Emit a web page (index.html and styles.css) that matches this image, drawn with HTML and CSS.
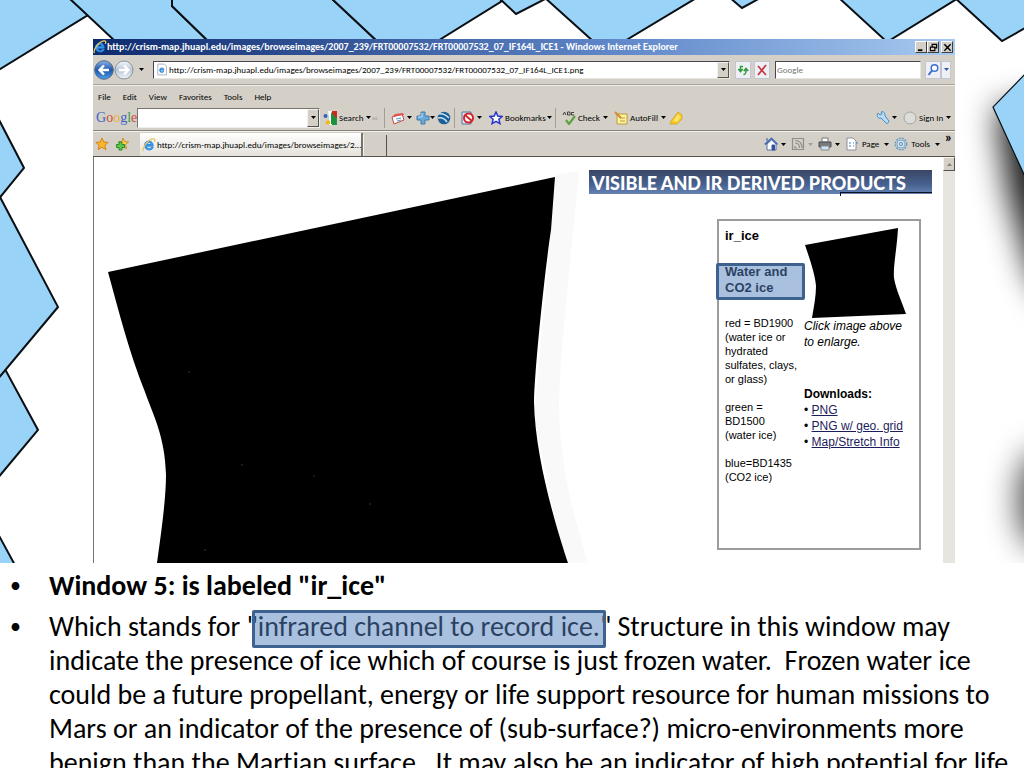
FILE: index.html
```html
<!DOCTYPE html>
<html lang="en">
<head>
<meta charset="utf-8">
<title>Window 5: ir_ice</title>
<link rel="stylesheet" href="styles.css">
</head>
<body>
<svg width="0" height="0" class="defs" aria-hidden="true">
  <defs>
    <linearGradient id="blueBall" x1="0" y1="0" x2="0" y2="1"><stop offset="0" stop-color="#8fb4e4"/><stop offset=".5" stop-color="#1d55ad"/><stop offset="1" stop-color="#4fa0e8"/></linearGradient>
    <linearGradient id="paleBall" x1="0" y1="0" x2="0" y2="1"><stop offset="0" stop-color="#f4f7fb"/><stop offset=".5" stop-color="#b9c6d6"/><stop offset="1" stop-color="#eef4fa"/></linearGradient>
    <symbol id="ie" viewBox="0 0 14 14"><path d="M11.2 8.2H4.6c.2 2.6 3.700 3 4.600 1.300h2.100C9.800 13.300 2.500 12.800 2.500 7.300 2.500 1.500 11.600 1.200 11.200 8.200zM4.700 6.500h4.500C8.900 4 5.200 4 4.700 6.500z" fill="#3c9bf0" stroke="#2a86dc" stroke-width=".9"/><path d="M1.500 13C-.5 10.500 5.500 1.800 11 .9c2-.3 2.200 1.200 1.200 3" fill="none" stroke="#e6c95a" stroke-width="1.300"/></symbol>
    <symbol id="arrow" viewBox="0 0 5 3"><path d="M0 0h5L2.500 3z" fill="currentColor"/></symbol>
    <symbol id="star" viewBox="0 0 14 14"><path d="M7 1l1.800 4 4.400.4-3.300 2.900 1 4.300L7 10.300l-3.900 2.300 1-4.300L.8 5.400 5.200 5z"/></symbol>
  </defs>
</svg>
<main class="slide">
  <svg class="backdrop" viewBox="0 0 1024 564" preserveAspectRatio="none" aria-hidden="true">
    <defs><filter id="soft" x="-200%" y="-100%" width="500%" height="300%"><feGaussianBlur stdDeviation="16"/></filter></defs>
    <g filter="url(#soft)"><path d="M996 108L1060 100V310L1034 280 1008 190z" fill="#000" opacity=".9"/><ellipse cx="1042" cy="500" rx="24" ry="50" opacity=".7"/></g>
    <g fill="#99d3f7" stroke="#0a0f14" stroke-width="2">
      <path d="M-3-3H68L88 15-3 71z"/>
      <path d="M68-3L116 42H209L172 6V-3z"/>
      <path d="M172-3V6L209 42H378L330-3z"/>
      <path d="M330-3L378 42H436L502 1 498-3z"/>
      <path d="M498-3L516 14 549-3z"/>
      <path d="M544-3L594 42H623L698-3z"/>
      <path d="M729-3L742 8 762-3z"/>
      <path d="M838-3L887 42 960-3z"/>
      <path d="M954-3L1002 41 1027 27V-3z"/>
      <path d="M1027 72L993 107 1027 181z" stroke-width="1.200"/>
      <path d="M-3 116L24 168-3 201z"/>
      <path d="M-3 360H0L38 430-3 479z"/>
      <path d="M-3 191L0 197 58 307-3 380z"/>
      <path d="M-3 532L16 567H-3z"/>
    </g>
  </svg>

  <section class="browser" aria-label="Windows Internet Explorer">
    <header class="titlebar">
      <svg class="icon"><use href="#ie"/></svg>
      <h1>http://crism-map.jhuapl.edu/images/browseimages/2007_239/FRT00007532/FRT00007532_07_IF164L_ICE1 - Windows Internet Explorer</h1>
      <div class="winbtns">
        <button aria-label="Minimize"><svg viewBox="0 0 10 10"><path d="M1 8h5" stroke="#000" stroke-width="2"/></svg></button>
        <button aria-label="Restore"><svg viewBox="0 0 10 10"><path d="M3.500 4V1.500h5v4H7M1.500 4.500h5v4h-5zM3 1.500h6M1 4.500h6" fill="none" stroke="#000" stroke-width="1.300"/></svg></button>
        <button class="apart" aria-label="Close"><svg viewBox="0 0 10 10"><path d="M1.500 1.500l7 7m0-7l-7 7" stroke="#000" stroke-width="1.600"/></svg></button>
      </div>
    </header>

    <div class="navbar">
      <div class="travel">
        <button aria-label="Back"><svg viewBox="0 0 20 22"><circle cx="10" cy="11" r="9.300" fill="url(#blueBall)" stroke="#54698c"/><path d="M15 11H6m4-4.500L5.500 11l4.500 4.500" fill="none" stroke="#fff" stroke-width="2.400"/></svg></button>
        <button aria-label="Forward"><svg viewBox="0 0 20 22"><circle cx="10" cy="11" r="9" fill="url(#paleBall)" stroke="#8a93a0"/><path d="M5 11h9m-4-4.500l4.500 4.500-4.500 4.500" fill="none" stroke="#fff" stroke-width="2.400"/></svg></button>
        <button class="recent" aria-label="Recent pages"><svg class="arrow"><use href="#arrow"/></svg></button>
      </div>
      <div class="address">
        <svg class="pageicon" viewBox="0 0 12 14"><path d="M1 .5h8l2.500 2.500v10.500H1z" fill="#fff" stroke="#9aa7b8"/><path d="M8.500 8H4.200c.2 1.800 2.500 2 3 1h1.300C7.500 11.500 3 11.300 3 7.800 3 4 9 4 8.500 8zM4.400 6.800h2.700C6.800 5.200 4.600 5.200 4.400 6.800z" fill="#2f86d6" stroke="#2f86d6" stroke-width=".6"/></svg>
        <input type="text" aria-label="Address" value="http://crism-map.jhuapl.edu/images/browseimages/2007_239/FRT00007532/FRT00007532_07_IF164L_ICE1.png">
        <button class="drop" aria-label="Show addresses"><svg class="arrow"><use href="#arrow"/></svg></button>
      </div>
      <button class="square" aria-label="Refresh"><svg viewBox="0 0 14 14"><path d="M7 3.500H4.500V8M2.300 6l2.200 2.600L6.700 6M7.500 11.500c2 0 2.500-1 2.500-4.500M7.800 8L10 5.500 12.200 8" fill="none" stroke="#2f9a3c" stroke-width="1.500"/></svg></button>
      <button class="square" aria-label="Stop"><svg viewBox="0 0 14 14"><path d="M3 3l8 9M11 2L3 12" stroke="#c63a44" stroke-width="1.800"/></svg></button>
      <input class="websearch" type="text" aria-label="Search the web" placeholder="Google">
      <div class="searchbtns">
        <button class="square" aria-label="Search"><svg viewBox="0 0 14 14"><circle cx="8.500" cy="5" r="3.300" fill="#fff" stroke="#3b6fd0" stroke-width="1.500"/><path d="M6 7.500L2.500 12" stroke="#3b6fd0" stroke-width="2"/></svg></button>
        <button class="square slim" aria-label="Search options"><svg class="arrow"><use href="#arrow"/></svg></button>
      </div>
    </div>

    <nav class="menubar" aria-label="Menu">
      <button>File</button><button>Edit</button><button>View</button><button>Favorites</button><button>Tools</button><button>Help</button>
    </nav>

    <div class="googlebar">
      <span class="logo"><i class="b">G</i><i class="r">o</i><i class="y">o</i><i class="b">g</i><i class="g">l</i><i class="r">e</i></span>
      <div class="combo"><input type="text" aria-label="Google search"><button class="drop" aria-label="Search history"><svg class="arrow"><use href="#arrow"/></svg></button></div>
      <button class="tool"><svg class="icon" viewBox="0 0 14 14"><path d="M5 0h9v14H6z" fill="#1d9a42"/><path d="M8 0h6v7H8z" fill="#c92b21"/><path d="M5 0h4v14H6z" fill="#fff"/><path d="M8 1v12l5 1V7z" fill="#1b9140"/><circle cx="2.500" cy="5" r="2" fill="#3560c0"/><circle cx="5" cy="11.500" r="2.300" fill="#f0b81c"/></svg>Search<svg class="arrow"><use href="#arrow"/></svg></button>
      <span class="grip">◦◦</span>
      <button class="tool ruled" aria-label="Gadgets"><svg class="icon" viewBox="0 0 14 14"><path d="M1 6l10-3 2 6-10 4z" fill="#fff" stroke="#c9463d"/><path d="M1 6l3-3 8-1 1 2z" fill="#e0564e"/><path d="M5 8l5-1M6 10l4-1" stroke="#4d9ad3"/></svg><svg class="arrow"><use href="#arrow"/></svg></button>
      <button class="tool" aria-label="Add"><svg class="icon" viewBox="0 0 14 14"><path d="M5 1h4v4h4v4H9v4H5V9H1V5h4z" fill="#6aaada" stroke="#447ba5"/><path d="M6 2v4H2" fill="none" stroke="#bfe0f6"/></svg><svg class="arrow near"><use href="#arrow"/></svg></button>
      <button class="tool" aria-label="Earth"><svg class="icon" viewBox="0 0 14 14"><circle cx="7" cy="7" r="6.300" fill="#1b5f94"/><path d="M2 3c3-1 6 0 10 4M1 7c4-1 7 1 9 4" stroke="#c7e3f3" fill="none" stroke-width="1.600"/></svg></button>
      <button class="tool ruled" aria-label="Popup blocker"><svg class="icon" viewBox="0 0 14 14"><path d="M1 1h9v12H1z" fill="#dbe9f6" stroke="#55749b"/><circle cx="7.500" cy="7" r="4.500" fill="#fff" stroke="#d1262c" stroke-width="2"/><path d="M4 4l7 6" stroke="#d1262c" stroke-width="2"/></svg><svg class="arrow"><use href="#arrow"/></svg></button>
      <button class="tool wide"><svg class="icon" fill="#fff" stroke="#2532cc" stroke-width="1.500"><use href="#star"/></svg>Bookmarks<svg class="arrow near"><use href="#arrow"/></svg></button>
      <button class="tool ruled"><svg class="icon" viewBox="0 0 14 14"><path d="M1 4l1.500-3L4 4M5.500 1v3H8V1zM12 1.500H9.500V4H12" fill="none" stroke="#333" stroke-width=".9"/><path d="M4 9l3 4 6-8" fill="none" stroke="#5da33f" stroke-width="2.200"/></svg>Check<svg class="arrow"><use href="#arrow"/></svg></button>
      <button class="tool"><svg class="icon" viewBox="0 0 14 14"><path d="M3 3h10v10H3z" fill="#fff3a0" stroke="#b99a3a"/><path d="M6 7h5M6 10h5" stroke="#b99a3a"/><path d="M1 1l6 6" stroke="#d88932" stroke-width="2.200"/></svg>AutoFill<svg class="arrow"><use href="#arrow"/></svg></button>
      <button class="tool" aria-label="Highlight"><svg class="icon" viewBox="0 0 14 14"><path d="M9 1l4 3v4l-5 5H1l1-3z" fill="#f4c61d" stroke="#c89812" stroke-width=".6"/><path d="M9 3L4 10l4 1 4-5" fill="#fce36a"/></svg></button>
      <span></span>
      <button class="tool" aria-label="Settings"><svg class="icon" viewBox="0 0 14 14"><path d="M2 2l2 2 2-1-1-2c3-1 4 1 4 4l4 5c0 2-2 3-3 2L5 7C2 8 0 5 2 2z" fill="#b7dcf4" stroke="#4d8dc0"/></svg><svg class="arrow"><use href="#arrow"/></svg></button>
      <button class="tool"><svg class="icon" viewBox="0 0 14 14"><circle cx="7" cy="7" r="6" fill="#dcdcda" stroke="#a5a5a2"/></svg>Sign In<svg class="arrow"><use href="#arrow"/></svg></button>
    </div>

    <div class="tabbar">
      <div class="favs">
        <button aria-label="Favorites center"><svg class="icon" fill="#fbb52c" stroke="#d3851a"><use href="#star"/></svg></button>
        <button aria-label="Add to favorites"><svg class="icon" viewBox="0 0 14 14"><path d="M8 1l1.500 3.500 4 .5-3 2.500 1 4L7 10l-3 1 1-4-2-2 4-.5z" fill="#fbd04b" stroke="#c88e25"/><path d="M4 5h3v2.500h2.500v3H7V13H4v-2.500H1.500v-3H4z" fill="#5fc750" stroke="#2b8a2b"/></svg></button>
      </div>
      <button class="tab"><svg class="icon"><use href="#ie"/></svg>http://crism-map.jhuapl.edu/images/browseimages/2...</button>
      <button class="newtab" aria-label="New tab"></button>
      <div class="commands">
        <button class="tool" aria-label="Home"><svg class="icon" viewBox="0 0 14 14"><path d="M3 7v6h9V7L7.500 3z" fill="#fff" stroke="#5871a5"/><path d="M.8 7.500L7.500 1.500l6 6" fill="none" stroke="#4a6fb5" stroke-width="1.700"/><path d="M3 1v3M8 8h2.500v5H8z" fill="#32549c" stroke="#32549c"/></svg><svg class="arrow"><use href="#arrow"/></svg></button>
        <button class="tool dim" aria-label="Feeds"><svg class="icon" viewBox="0 0 14 14"><path d="M1.500 1.500h11v11h-11zM4 6c3 0 4.500 2 4.500 5M4 3.500c4.500 0 7 3 7 7.500M4 9v2h2" fill="none" stroke="#8e8e8a" stroke-width="1.200"/></svg><svg class="arrow"><use href="#arrow"/></svg></button>
        <button class="tool" aria-label="Print"><svg class="icon" viewBox="0 0 14 14"><path d="M4 1h6v4H4z" fill="#fff" stroke="#777"/><path d="M1 5h12v5H1z" fill="#77797d" stroke="#4d5055"/><path d="M3 9h8v4H3z" fill="#cfe4f7" stroke="#888"/></svg><svg class="arrow"><use href="#arrow"/></svg></button>
        <button class="tool"><svg class="icon" viewBox="0 0 14 14"><path d="M2 1h6l3 3v9H2z" fill="#fff" stroke="#8c9199"/><path d="M4 6h2M4 9h2M8 6h1M8 9h1M11 6h2" stroke="#4b7ac0"/></svg>Page<svg class="arrow"><use href="#arrow"/></svg></button>
        <button class="tool"><svg class="icon" viewBox="0 0 14 14"><circle cx="7" cy="7" r="5.700" fill="none" stroke="#6b9cc2" stroke-width="1.500" stroke-dasharray="2 1"/><circle cx="7" cy="7" r="4" fill="#cfe6f6" stroke="#7fadd0"/><circle cx="7" cy="7" r="1.700" fill="#d4d0c8" stroke="#6b9cc2"/></svg>Tools<svg class="arrow"><use href="#arrow"/></svg></button>
        <button class="more" aria-label="More commands">»</button>
      </div>
    </div>

    <div class="viewport">
      <svg class="scene" viewBox="0 0 495 406" role="img" aria-label="ir_ice browse image">
        <path d="M462 18L485 14C478 90 466 190 465 250 466 310 480 360 494 406H470L440 260z" fill="#f9f9fa"/>
        <path d="M14 115L461 20 457 73C452 105 441 205 440 245 441 300 462 370 474 406H63C68 370 72 340 72 318 71 280 60 260 51 235 35 195 25 155 14 115z"/>
        <g fill="#2a2410"><circle cx="95" cy="215" r="1"/><circle cx="276" cy="347" r="1"/><circle cx="220" cy="319" r="1"/><circle cx="111" cy="393" r="1"/><circle cx="148" cy="308" r="1"/></g>
      </svg>
      <div class="side">
        <h2 class="banner">VISIBLE AND IR DERIVED PRODUCTS</h2>
        <article class="panel">
          <div class="legend">
            <h3>ir_ice</h3>
            <p class="kind"><span>Water and<br>CO2 ice</span></p>
            <p>red = BD1900<br>(water ice or<br>hydrated<br>sulfates, clays,<br>or glass)</p>
            <p>green =<br>BD1500<br>(water ice)</p>
            <p>blue=BD1435<br>(CO2 ice)</p>
          </div>
          <div class="files">
            <svg viewBox="0 0 102 90" role="img" aria-label="ir_ice thumbnail"><path d="M1 17L94 0C93 20 89 38 90 50 92 62 98 74 102 86L8 90C10 78 12 68 12 58 11 46 6 32 1 17z"/></svg>
            <p><em>Click image above<br>to enlarge.</em></p>
            <h4>Downloads:</h4>
            <ul>
              <li><a href="#png">PNG</a></li>
              <li><a href="#grid">PNG w/ geo. grid</a></li>
              <li><a href="#map">Map/Stretch Info</a></li>
            </ul>
          </div>
        </article>
      </div>
      <div class="scroll"><button aria-label="Scroll up"><svg class="arrow" viewBox="0 0 5 3"><path d="M0 3h5L2.500 0z" fill="#85827b"/></svg></button></div>
    </div>
  </section>

  <ul class="notes">
    <li><strong>Window 5: is labeled "ir_ice"</strong></li>
    <li>Which stands for "<span class="marked">infrared channel to record ice.</span>" Structure in this window may<br>indicate the presence of ice which of course is just frozen water.&nbsp; Frozen water ice<br>could be a future propellant, energy or life support resource for human missions to<br>Mars or an indicator of the presence of (sub-surface?) micro-environments more<br>benign than the Martian surface.&nbsp; It may also be an indicator of high potential for life</li>
  </ul>
</main>
</body>
</html>
```
FILE: styles.css
```css
* { box-sizing: border-box; }
body { margin: 0; background: #fff; color: #000; }
h1, h2, h3, h4, p, ul { margin: 0; padding: 0; }
ul { list-style: none; }
button, input { font: inherit; color: inherit; margin: 0; padding: 0; border: 0; background: none; border-radius: 0; min-width: 0; }
button { display: flex; align-items: center; justify-content: center; white-space: nowrap; }
svg { display: block; flex: none; }
.defs { position: absolute; }
.icon { width: 14px; height: 14px; }
.arrow { width: 5px; height: 3px; }

.slide { position: relative; height: 100vh; overflow: hidden; }
.backdrop { position: absolute; top: 0; left: 0; width: 100%; height: 564px; }

.browser {
  position: relative;
  margin: 39px 69px 0 93px;
  background: #d4d0c8;
  font-family: Carlito, Calibri, "Liberation Sans", sans-serif;
  font-size: 9px;
  line-height: 14px;
  font-variant-ligatures: none;
}
.titlebar { display: flex; align-items: center; height: 16px; padding-right: 2px; background: linear-gradient(90deg, #0d2a6d, #5f86c8 60%, #a6caf0); color: #fff; }
.titlebar h1 { flex: 1; min-width: 0; overflow: hidden; white-space: nowrap; font-size: 10px; line-height: 16px; }
.winbtns { display: flex; }
.winbtns button { width: 12px; height: 12px; background: #d4d0c8; border: 1px solid; border-color: #fff #404040 #404040 #fff; }
.winbtns .apart { margin-left: 2px; }
.winbtns svg { width: 9px; height: 9px; }

.navbar { display: flex; align-items: center; height: 30px; padding-right: 4px; border-bottom: 1px solid #a8a59d; }
.travel { display: flex; width: 60px; padding-left: 1px; }
.travel svg:not(.arrow) { width: 20px; height: 22px; }
.recent { width: 14px; }
.address { flex: 1; display: flex; align-items: center; height: 18px; padding-left: 3px; background: #fff; border: 1px solid; border-color: #4a4550 #e8e6e0 #e8e6e0 #4a4550; margin-right: 5px; }
.address input { flex: 1; height: 16px; margin-left: 2px; }
.pageicon { width: 10px; height: 13px; }
.drop { width: 12px; height: 16px; background: #d4d0c8; border: 1px solid; border-color: #f4f2ee #55524c #55524c #f4f2ee; }
.square { width: 16px; height: 18px; background: #eef0f5; border: 1px solid #c2c6d0; margin-right: 3px; }
.square svg:not(.arrow) { width: 14px; height: 14px; }
.websearch { width: 146px; height: 18px; margin: 0 4px 0 2px; padding-left: 1px; background: #fff; border: 1px solid; border-color: #4a4550 #e8e6e0 #e8e6e0 #4a4550; }
.websearch::placeholder { color: #777; opacity: 1; }
.searchbtns { display: flex; color: #2c5c9c; }
.searchbtns .square { margin: 0; }
.searchbtns .slim { width: 10px; }

.menubar { display: flex; gap: 12px; height: 20px; padding: 2px 5px 0; border-top: 1px solid #eeece6; }

.googlebar {
  display: grid;
  grid-template-columns: 44px 183px 52px 12px 29px 21px 20px 33px 68px 56px 55px 18px 1fr 27px 55px;
  align-items: center;
  height: 26px;
  border-bottom: 1px solid #85827b;
}
.logo { padding-left: 3px; font: 14px/20px "Liberation Serif", serif; }
.logo i { font-style: normal; }
.logo .b { color: #3c62c4; }
.logo .r { color: #d24a3f; }
.logo .y { color: #e8b32c; }
.logo .g { color: #3a9c4c; }
.combo { display: flex; height: 20px; background: #fff; border: 1px solid #77746d; border-right-color: #eee; border-bottom-color: #eee; }
.combo input { flex: 1; }
.combo .drop { height: 18px; }
.tool { gap: 3px; justify-content: flex-start; height: 20px; padding-left: 3px; }
.tool .icon { margin-right: -1px; }
.near { margin-left: -2px; }
.ruled { border-left: 1px solid #a19e96; padding-left: 6px; }
.wide { padding-left: 2px; }
.grip { color: #8d8a83; font-size: 8px; }

.tabbar { display: flex; align-items: flex-end; height: 26px; border-top: 1px solid #f4f2ee; border-bottom: 1px solid #55524c; }
.favs { display: flex; gap: 6px; align-self: center; width: 47px; padding-left: 2px; }
.tab { width: 223px; height: 23px; justify-content: flex-start; gap: 1px; padding-left: 2px; background: linear-gradient(#fff, #e4e1da); border-right: 2px solid #77746d; }
.newtab { width: 24px; height: 21px; border-right: 1px solid #55524c; border-left: 1px solid #f4f2ee; }
.commands { display: flex; align-self: stretch; align-items: center; gap: 4px; margin-left: auto; padding-right: 2px; }
.commands .tool { padding-left: 1px; gap: 5px; }
.commands .icon { margin-right: -2px; }
.commands .dim { color: #a19e96; }
.more { align-self: flex-start; width: 9px; font-size: 14px; font-weight: bold; line-height: 12px; }

.viewport { display: grid; grid-template-columns: minmax(0, 495fr) minmax(0, 354fr) 12px; background: #fff; border-left: 1px solid #77746d; }
.scene { width: 100%; height: auto; }
.side { display: flex; flex-direction: column; padding: 13px 11px 0 0; font-family: "Liberation Sans", Arial, sans-serif; }
.banner { position: relative; height: 24px; padding-left: 3px; background: linear-gradient(#3a4664, #47618f 60%, #6683b4); color: #fff; font: 900 18px/26px Lato, sans-serif; white-space: nowrap; }
.banner::after { content: ""; position: absolute; right: 0; bottom: -2px; width: 91px; height: 3px; border-top: 1px solid #0d1020; border-left: 1px solid #0d1020; }
.panel { display: flex; align-self: flex-end; width: 204px; height: 331px; margin: 25px 11px 0 0; border: 2px solid #9c9c9c; }
.legend { width: 85px; padding: 7px 0 0 6px; font-size: 11px; line-height: 14px; white-space: nowrap; }
.legend h3 { font-size: 13px; line-height: 16px; margin-bottom: 20px; }
.legend p { margin-bottom: 14px; }
.legend .kind { position: relative; margin-bottom: 20px; font-size: 13px; font-weight: bold; line-height: 16px; }
.kind::after { content: ""; position: absolute; inset: -1px -1px -4px -9px; background: rgba(84, 130, 192, .5); border: 3px solid #3d628f; border-radius: 2px; }
.files { padding: 7px 0 0; font-size: 12px; line-height: 16px; white-space: nowrap; }
.files svg { width: 102px; height: 90px; }
.files h4 { margin-top: 36px; font-size: 12px; line-height: 16px; }
.files li::before { content: "• "; }
.files a { color: #1d1d5c; }
.scroll { background: #e6e5df; }
.scroll button { width: 12px; height: 14px; background: #d4d0c8; border: 1px solid; border-color: #f4f2ee #55524c #55524c #f4f2ee; }

.notes { position: relative; padding: 6px 0 0 49px; background: #fff; font: 28px/34px Carlito, Calibri, Lato, sans-serif; font-variant-ligatures: none; white-space: nowrap; }
.notes li { margin-bottom: 7px; }
.notes li::before { content: "•"; float: left; margin-left: -39px; font-size: 22px; }
.marked { position: relative; }
.marked::after { content: ""; position: absolute; inset: 1px -6px -4px -6px; background: rgba(84, 130, 192, .5); border: 3px solid #3d628f; border-radius: 2px; }
```
